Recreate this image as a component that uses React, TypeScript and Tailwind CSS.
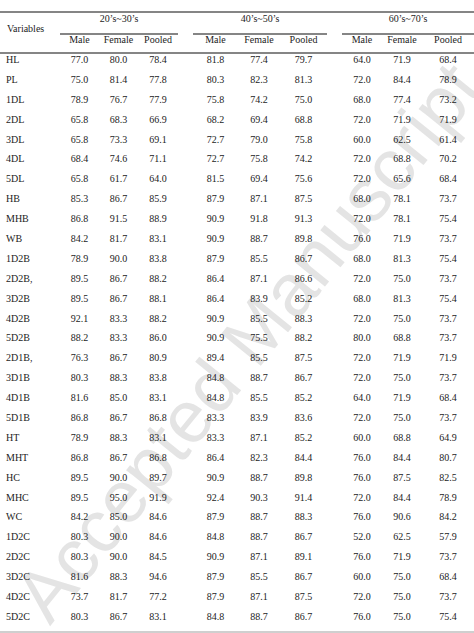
const groups = ["20’s~30’s", "40’s~50’s", "60’s~70’s"];
const subs = ["Male", "Female", "Pooled"];

const rows: [string, string[]][] = [
  ["HL", ["77.0", "80.0", "78.4", "81.8", "77.4", "79.7", "64.0", "71.9", "68.4"]],
  ["PL", ["75.0", "81.4", "77.8", "80.3", "82.3", "81.3", "72.0", "84.4", "78.9"]],
  ["1DL", ["78.9", "76.7", "77.9", "75.8", "74.2", "75.0", "68.0", "77.4", "73.2"]],
  ["2DL", ["65.8", "68.3", "66.9", "68.2", "69.4", "68.8", "72.0", "71.9", "71.9"]],
  ["3DL", ["65.8", "73.3", "69.1", "72.7", "79.0", "75.8", "60.0", "62.5", "61.4"]],
  ["4DL", ["68.4", "74.6", "71.1", "72.7", "75.8", "74.2", "72.0", "68.8", "70.2"]],
  ["5DL", ["65.8", "61.7", "64.0", "81.5", "69.4", "75.6", "72.0", "65.6", "68.4"]],
  ["HB", ["85.3", "86.7", "85.9", "87.9", "87.1", "87.5", "68.0", "78.1", "73.7"]],
  ["MHB", ["86.8", "91.5", "88.9", "90.9", "91.8", "91.3", "72.0", "78.1", "75.4"]],
  ["WB", ["84.2", "81.7", "83.1", "90.9", "88.7", "89.8", "76.0", "71.9", "73.7"]],
  ["1D2B", ["78.9", "90.0", "83.8", "87.9", "85.5", "86.7", "68.0", "81.3", "75.4"]],
  ["2D2B,", ["89.5", "86.7", "88.2", "86.4", "87.1", "86.6", "72.0", "75.0", "73.7"]],
  ["3D2B", ["89.5", "86.7", "88.1", "86.4", "83.9", "85.2", "68.0", "81.3", "75.4"]],
  ["4D2B", ["92.1", "83.3", "88.2", "90.9", "85.5", "88.3", "72.0", "75.0", "73.7"]],
  ["5D2B", ["88.2", "83.3", "86.0", "90.9", "75.5", "88.2", "80.0", "68.8", "73.7"]],
  ["2D1B,", ["76.3", "86.7", "80.9", "89.4", "85.5", "87.5", "72.0", "71.9", "71.9"]],
  ["3D1B", ["80.3", "88.3", "83.8", "84.8", "88.7", "86.7", "72.0", "75.0", "73.7"]],
  ["4D1B", ["81.6", "85.0", "83.1", "84.8", "85.5", "85.2", "64.0", "71.9", "68.4"]],
  ["5D1B", ["86.8", "86.7", "86.8", "83.3", "83.9", "83.6", "72.0", "75.0", "73.7"]],
  ["HT", ["78.9", "88.3", "83.1", "83.3", "87.1", "85.2", "60.0", "68.8", "64.9"]],
  ["MHT", ["86.8", "86.7", "86.8", "86.4", "82.3", "84.4", "76.0", "84.4", "80.7"]],
  ["HC", ["89.5", "90.0", "89.7", "90.9", "88.7", "89.8", "76.0", "87.5", "82.5"]],
  ["MHC", ["89.5", "95.0", "91.9", "92.4", "90.3", "91.4", "72.0", "84.4", "78.9"]],
  ["WC", ["84.2", "85.0", "84.6", "87.9", "88.7", "88.3", "76.0", "90.6", "84.2"]],
  ["1D2C", ["80.3", "90.0", "84.6", "84.8", "88.7", "86.7", "52.0", "62.5", "57.9"]],
  ["2D2C", ["80.3", "90.0", "84.5", "90.9", "87.1", "89.1", "76.0", "71.9", "73.7"]],
  ["3D2C", ["81.6", "88.3", "94.6", "87.9", "85.5", "86.7", "60.0", "75.0", "68.4"]],
  ["4D2C", ["73.7", "81.7", "77.2", "87.9", "87.1", "87.5", "72.0", "75.0", "73.7"]],
  ["5D2C", ["80.3", "86.7", "83.1", "84.8", "88.7", "86.7", "76.0", "75.0", "75.4"]],
];

const cols = "grid grid-cols-[60px_39px_39px_40px_15px_45px_42px_47px_15px_40px_40px_52px]";

export default function App() {
  return (
    <div className="relative w-[474px] h-[633px] overflow-hidden bg-white font-['Liberation_Serif',serif] text-[10px] text-[#1c1c1c]">
      {/* watermark */}
      <div className="absolute left-[248px] top-[342px] -translate-x-1/2 -translate-y-1/2 -rotate-[51deg] whitespace-nowrap font-['Liberation_Sans',sans-serif] text-[74px] leading-none text-[#e4e4e4] pointer-events-none">
        Accepted Manuscript
      </div>

      <div className="relative flex flex-col">
        <div className="h-[11px]" />
        <div className="h-[2px] bg-[#858585]" />

        {/* header */}
        <div className={cols}>
          <div className="row-span-3 pl-[7px] pt-[10px] leading-[11px]">Variables</div>
          {groups.map((g, i) => (
            <div
              key={g}
              className={`${i === 0 ? "col-start-2" : i === 1 ? "col-start-6" : "col-start-10"} col-span-3 h-[20px] text-center leading-[11px]`}
            >
              {g}
            </div>
          ))}
          {groups.map((g, i) => (
            <div
              key={g + "-line"}
              className={`${i === 0 ? "col-start-2" : i === 1 ? "col-start-6" : "col-start-10"} col-span-3 h-[2px] bg-[#858585]`}
            />
          ))}
          {[2, 6, 10].map((start) =>
            subs.map((s, j) => (
              <div
                key={start + s}
                className={`${start === 2 && j === 0 ? "col-start-2" : start === 6 && j === 0 ? "col-start-6" : start === 10 && j === 0 ? "col-start-10" : ""} h-[17px] text-center leading-[9px]`}
              >
                {s}
              </div>
            ))
          )}
        </div>
        <div className="h-[2px] bg-[#858585]" />

        {/* body */}
        {rows.map(([label, vals]) => (
          <div key={label} className={`${cols} h-[19.9px] leading-[11px]`}>
            <div className="pl-[6px]">{label}</div>
            <div className="text-center">{vals[0]}</div>
            <div className="text-center">{vals[1]}</div>
            <div className="text-center">{vals[2]}</div>
            <div />
            <div className="text-center">{vals[3]}</div>
            <div className="text-center">{vals[4]}</div>
            <div className="text-center">{vals[5]}</div>
            <div />
            <div className="text-center">{vals[6]}</div>
            <div className="text-center">{vals[7]}</div>
            <div className="text-center">{vals[8]}</div>
          </div>
        ))}
        <div className="h-[2px] bg-[#cfcfcf]" />
      </div>
    </div>
  );
}
